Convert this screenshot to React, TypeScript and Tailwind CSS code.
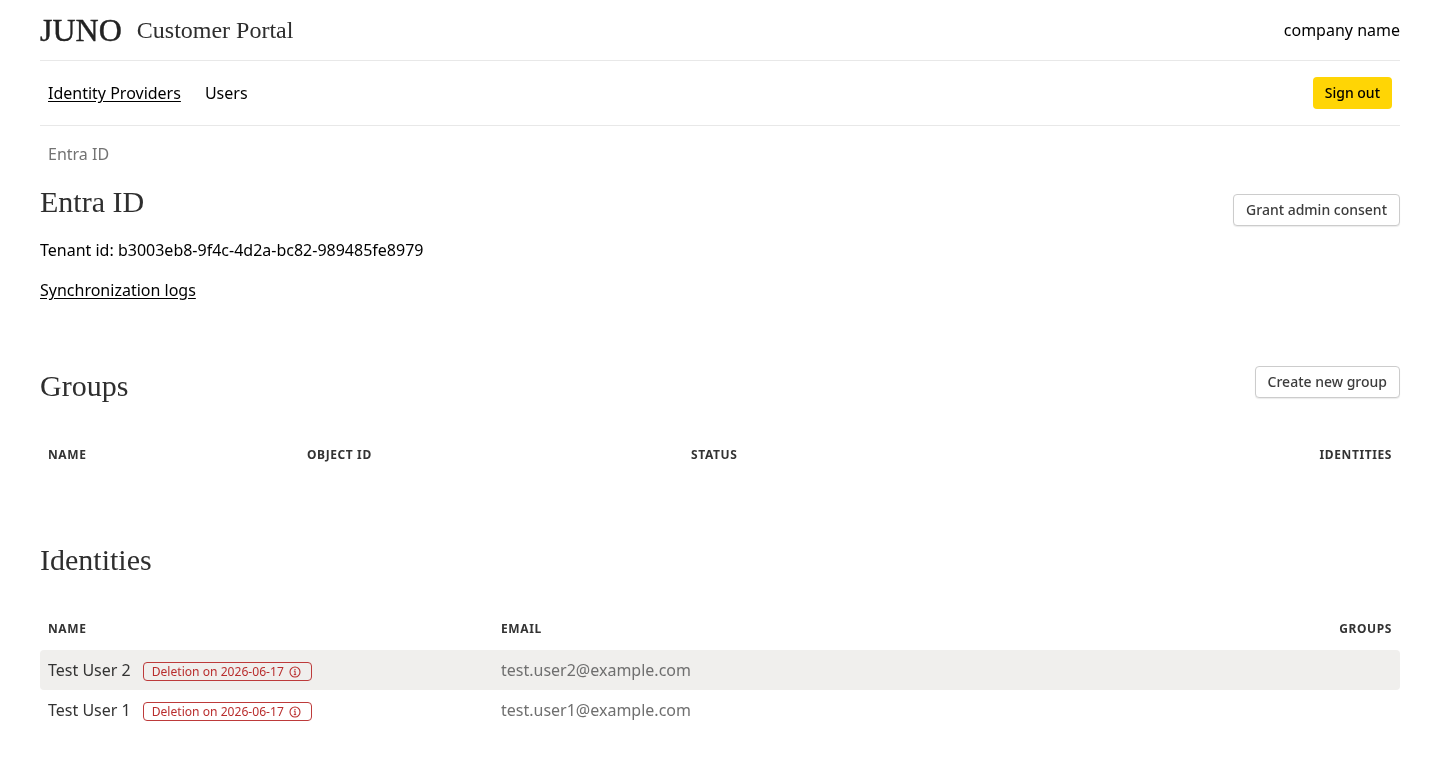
import React from "react";

function InfoIcon() {
  return (
    <svg width="12" height="12" viewBox="0 0 12 12" fill="none" stroke="currentColor" className="ml-[5px] shrink-0">
      <circle cx="6" cy="6" r="5" strokeWidth="1.1" />
      <path d="M4.9 5.2H6.1V8.6M4.8 8.6H7.2" strokeWidth="1" />
      <path d="M6 3V4.2" strokeWidth="1.2" />
    </svg>
  );
}

function Badge() {
  return (
    <span className="relative top-[1.5px] ml-3 inline-flex h-[19px] w-[169px] items-center rounded-[4px] border border-[#bd3a3a] pl-2 pt-px text-[12.1px] leading-none text-[#b92d2d]">
      Deletion on 2026-06-17
      <InfoIcon />
    </span>
  );
}

function Th({ label, className = "" }: { label: string; className?: string }) {
  return (
    <div className={`px-2 text-[12px] font-bold leading-4 tracking-[0.6px] text-[#333333] ${className}`}>{label}</div>
  );
}

const serif = "font-['Liberation_Serif',serif]";

function OutlineButton({ label }: { label: string }) {
  return (
    <button className="h-8 rounded-[4px] border border-[#cccccc] bg-white px-3 text-[14px] font-medium text-[#3c3c3c] shadow-[0_1px_1px_rgba(0,0,0,0.08)]">
      {label}
    </button>
  );
}

function UserRow({ name, email, active }: { name: string; email: string; active?: boolean }) {
  return (
    <div className={`grid h-10 grid-cols-[453px_1fr_100px] items-center rounded-[4px] ${active ? "bg-[#f0efed]" : ""}`}>
      <div className="flex items-center px-2 text-[#333333]">
        <span>{name}</span>
        <Badge />
      </div>
      <div className="px-2 text-[#6f6f6f]">{email}</div>
      <div />
    </div>
  );
}

export default function App() {
  return (
    <div className="min-h-[761px] px-10 font-['Noto_Sans',sans-serif] text-[16px] leading-6 text-black [will-change:transform]">
      <header className="flex h-[61px] items-center justify-between border-b border-[#e8e8e8]">
        <div className={`flex items-center ${serif} text-[#222222]`}>
          <span className="text-[32px] leading-10 [-webkit-text-stroke:0.4px_#222222]">JUNO</span>
          <span className="ml-[15px] text-[24px] leading-8 text-[#2e2e2e]">Customer Portal</span>
        </div>
        <div>company name</div>
      </header>

      <nav className="flex h-[65px] items-center justify-between border-b border-[#e8e8e8] px-2">
        <div className="flex gap-6">
          <a className="underline underline-offset-2">Identity Providers</a>
          <a>Users</a>
        </div>
        <button className="h-8 rounded-[4px] bg-[#ffd505] px-3 text-[14px] font-medium text-black">Sign out</button>
      </nav>

      <div className="px-2 pt-4 text-[#737373]">Entra ID</div>

      <section className="mt-[18px] flex items-start justify-between">
        <div>
          <h1 className={`${serif} text-[30px] leading-9 text-[#2e2e2e]`}>Entra ID</h1>
          <p className="mt-[18px]">Tenant id: b3003eb8-9f4c-4d2a-bc82-989485fe8979</p>
          <p className="mt-4 underline underline-offset-2">Synchronization logs</p>
        </div>
        <div className="pt-[10px]">
          <OutlineButton label="Grant admin consent" />
        </div>
      </section>

      <section className="mt-[62px]">
        <div className="flex h-9 items-start justify-between">
          <h2 className={`${serif} pt-[4px] text-[30px] leading-9 text-[#2e2e2e]`}>Groups</h2>
          <div className="pt-[2px]">
            <OutlineButton label="Create new group" />
          </div>
        </div>
        <div className="mt-[47px] grid grid-cols-[259px_384px_1fr_200px]">
          <Th label="NAME" />
          <Th label="OBJECT ID" />
          <Th label="STATUS" />
          <Th label="IDENTITIES" className="text-right" />
        </div>
      </section>

      <section className="mt-[79px]">
        <h2 className={`${serif} h-9 text-[30px] leading-9 text-[#2e2e2e]`}>Identities</h2>
        <div className="mt-[43px] grid grid-cols-[453px_1fr_100px]">
          <Th label="NAME" />
          <Th label="EMAIL" />
          <Th label="GROUPS" className="text-right" />
        </div>
        <div className="mt-[13px]">
          <UserRow name="Test User 2" email="test.user2@example.com" active />
          <UserRow name="Test User 1" email="test.user1@example.com" />
        </div>
      </section>
    </div>
  );
}
